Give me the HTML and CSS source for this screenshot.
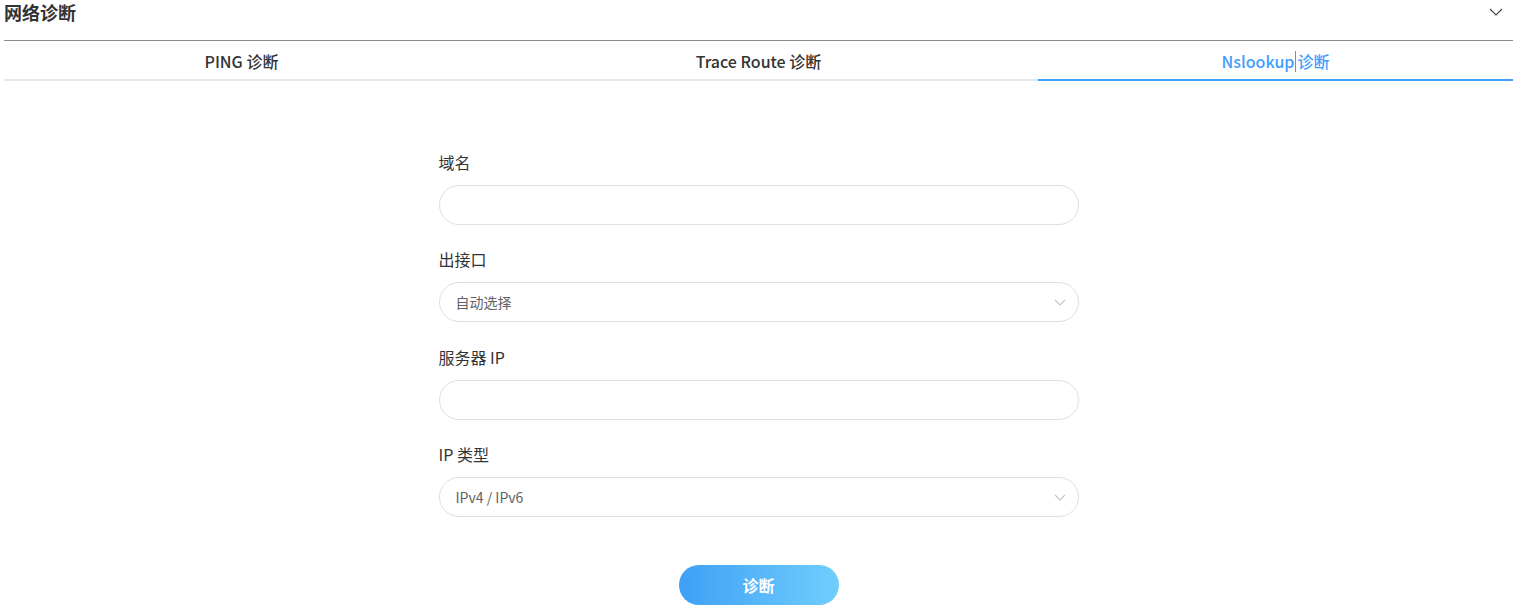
FILE: index.html
```html
<!DOCTYPE html>
<html lang="zh-CN">
<head>
  <meta charset="UTF-8" />
  <meta name="viewport" content="width=device-width, initial-scale=1.0"/>
  <title>网络诊断</title>
  <link rel="stylesheet" href="styles.css">
</head>
<body>
  <div class="panel">
    <div class="panel-head">
      <span class="panel-title">网络诊断</span>
      <svg class="collapse" width="14" height="8" viewBox="0 0 14 8">
        <path d="M1 1 L7 7 L13 1" fill="none" stroke="#444" stroke-width="1.2"/>
      </svg>
    </div>

    <div class="tabs">
      <div class="tab">PING 诊断</div>
      <div class="tab">Trace Route 诊断</div>
      <div class="tab active">Nslookup<span class="caret"></span>诊断</div>
    </div>

    <form class="form">
      <label class="field-label">域名</label>
      <div class="control"></div>

      <label class="field-label">出接口</label>
      <div class="control select">
        <span>自动选择</span>
        <svg width="12" height="7" viewBox="0 0 12 7"><path d="M1 1 L6 6 L11 1" fill="none" stroke="#c0c4cc" stroke-width="1.1"/></svg>
      </div>

      <label class="field-label">服务器 IP</label>
      <div class="control"></div>

      <label class="field-label">IP 类型</label>
      <div class="control select">
        <span>IPv4 / IPv6</span>
        <svg width="12" height="7" viewBox="0 0 12 7"><path d="M1 1 L6 6 L11 1" fill="none" stroke="#c0c4cc" stroke-width="1.1"/></svg>
      </div>

      <button type="button" class="submit">诊断</button>
    </form>
  </div>
</body>
</html>
```

FILE: styles.css
```css
body {
  margin: 0;
  background: #ffffff;
  color: #333333;
  font-family: 'Noto Sans CJK SC', 'Noto Sans', sans-serif;
}

.panel {
  padding: 0 8px 0 4px;
}

.panel-head {
  display: flex;
  justify-content: space-between;
  align-items: center;
  height: 26px;
  padding-bottom: 14px;
  border-bottom: 1px solid #8c8c8c;
}

.panel-title {
  font-size: 18px;
  font-weight: bold;
  color: #333;
  line-height: 24px;
  margin-top: -2px;
}

.collapse {
  margin-right: 10px;
  margin-top: -2px;
}

.tabs {
  display: grid;
  grid-template-columns: repeat(3, 1fr);
  column-gap: 42px;
  border-bottom: 2px solid #e4e7ee;
}

.tab {
  text-align: center;
  font-size: 16px;
  font-weight: 500;
  color: #333;
  height: 38px;
  line-height: 40px;
  margin-bottom: -2px;
  border-bottom: 2px solid transparent;
}

.tab.active {
  color: #409eff;
  border-bottom-color: #409eff;
}

.caret {
  display: inline-block;
  width: 1px;
  height: 21px;
  background: #409eff;
  vertical-align: -4px;
  margin: 0 1px;
}

.form {
  width: 640px;
  margin: 71px auto 0;
  display: flex;
  flex-direction: column;
}

.field-label {
  font-size: 16px;
  line-height: 20px;
  color: #333;
  margin-bottom: 13px;
}

.control {
  box-sizing: border-box;
  height: 40px;
  border: 1px solid #dcdfe6;
  border-radius: 20px;
  margin-bottom: 24px;
  padding: 0 12px 0 16px;
  display: flex;
  align-items: center;
  justify-content: space-between;
  font-size: 14px;
  color: #606266;
}

.select + .field-label {
  margin-top: 1px;
}

.submit {
  align-self: center;
  width: 160px;
  height: 40px;
  margin-top: 24px;
  border: none;
  border-radius: 20px;
  background: linear-gradient(90deg, #3ea0f6, #70cefc);
  color: white;
  font-family: inherit;
  font-size: 16px;
  font-weight: bold;
  cursor: pointer;
}
```
